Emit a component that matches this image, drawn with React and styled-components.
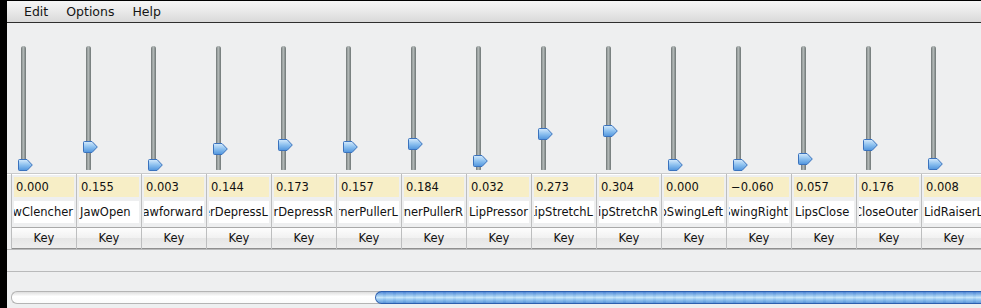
import React from "react"
import styled, { createGlobalStyle } from "styled-components"

const GlobalStyle = createGlobalStyle`
  html, body {
    margin: 0;
    padding: 0;
    background: #000000;
  }
`

const channels = [
  ["JawClencher", 0.0],
  ["JawOpen", 0.155],
  ["Jawforward", 0.003],
  ["LipCornerDepressL", 0.144],
  ["LipCornerDepressR", 0.173],
  ["LipCornerPullerL", 0.157],
  ["LipCornerPullerR", 0.184],
  ["LipPressor", 0.032],
  ["LipStretchL", 0.273],
  ["LipStretchR", 0.304],
  ["LipSwingLeft", 0.0],
  ["LipSwingRight", -0.06],
  ["LipsClose", 0.057],
  ["LidCloseOuter", 0.176],
  ["LidRaiserL", 0.008],
]

const Window = styled.div`
  width: 974px;
  height: 307px;
  margin-top: 1px;
  margin-left: 7px;
  background: #eeeff0;
  display: flex;
  flex-direction: column;
  overflow: hidden;
  font-family: "DejaVu Sans", "Liberation Sans", sans-serif;
  font-size: 11.5px;
  color: #111;
`

const MenuBar = styled.div`
  height: 21px;
  flex: none;
  display: flex;
  align-items: center;
  padding-left: 8px;
  background: linear-gradient(#f6f6f6, #e9e9e9 50%, #d9d9d9);
  border-bottom: 1px solid #2e2e2e;
`

const MenuItem = styled.span`
  padding: 0 9px;
  font-size: 12.5px;
  line-height: 21px;
  color: #151515;
`

const SliderRow = styled.div`
  display: flex;
  height: 150px;
  flex: none;
  padding-left: 4px;
`

const SliderCell = styled.div`
  position: relative;
  width: 65px;
  flex: none;
`

const Track = styled.div`
  margin: 23px 0 0 10px;
  width: 5px;
  height: 124px;
  border-radius: 3px 3px 1px 1px;
  background: linear-gradient(90deg, #6b7272, #b6bcbb 45%, #9aa1a0 65%, #6e7575);
`

const Thumb = styled.svg`
  position: absolute;
  left: 7px;
  width: 15px;
  height: 12px;
`

const Table = styled.div`
  border-top: 1px solid #c9cacb;
  box-shadow: inset 0 1px 0 #ffffff;
  padding-left: 4px;
  flex: none;
`

const Row = styled.div`
  display: flex;
  height: ${p => p.$h}px;
`

const Cell = styled.div`
  width: 65px;
  flex: none;
  box-sizing: border-box;
  border-left: 1px solid #bdbebf;
  padding: ${p => p.$pad};
  display: flex;
`

const ValueBox = styled.div`
  flex: 1;
  height: 20px;
  background: #f7eec6;
  line-height: 20px;
  padding-left: 2px;
  white-space: nowrap;
  overflow: hidden;
`

const NameBox = styled.div`
  flex: 1;
  height: 22px;
  background: #ffffff;
  line-height: 22px;
  padding: 0 1px;
  white-space: nowrap;
  overflow: hidden;
  direction: rtl;
  text-align: left;
`

const NameText = styled.bdi`
  direction: ltr;
  unicode-bidi: isolate;
`

const KeyButton = styled.div`
  flex: 1;
  height: 20px;
  border-top: 1px solid #a9a9a9;
  border-bottom: 1px solid #8f8f8f;
  background: linear-gradient(#fdfdfd, #f1f1f1 50%, #e6e6e6 51%, #eeeeee);
  text-align: center;
  line-height: 20px;
  font-size: 11.5px;
`

const Divider = styled.div`
  height: 21px;
  flex: none;
  border-top: 1px solid #b9babb;
`

const ScrollArea = styled.div`
  height: 18px;
  flex: none;
  border-top: 1px solid #b9babb;
  padding: 19px 0 0 4px;
`

const ScrollTrack = styled.div`
  height: 11px;
  display: flex;
  border: 1px solid #b4b4b4;
  border-right: none;
  border-radius: 6px 0 0 6px;
  background: linear-gradient(#dedede, #ffffff 40%, #fbfbfb);
  padding-left: 363px;
`

const ScrollThumb = styled.div`
  flex: 1;
  margin: -1px 0;
  border-radius: 7px 0 0 7px;
  border: 1px solid #2d5fae;
  border-right: none;
  background:
    repeating-linear-gradient(90deg, rgba(255, 255, 255, 0.06) 0 7px, rgba(60, 120, 200, 0.06) 7px 10px),
    linear-gradient(#4d86d6, #9ccbf1 35%, #c4e4fa 50%, #8fc3ef 70%, #5a95da);
`

const ThumbShape = () => (
  <defs>
    <linearGradient id="thumbFill" x1="0" y1="0" x2="0" y2="1">
      <stop offset="0" stopColor="#d6ebfc" />
      <stop offset="0.5" stopColor="#8cc0ef" />
      <stop offset="1" stopColor="#4f94dd" />
    </linearGradient>
  </defs>
)

const App = () => (
  <>
    <GlobalStyle />
    <Window>
      <MenuBar>
        <MenuItem>Edit</MenuItem>
        <MenuItem>Options</MenuItem>
        <MenuItem>Help</MenuItem>
      </MenuBar>
      <SliderRow>
        {channels.map(([name, v]) => (
          <SliderCell key={name}>
            <Track />
            <Thumb viewBox="0 0 15 12" style={{ top: 136 - Math.max(v, 0) * 113 }}>
              <ThumbShape />
              <path
                d="M1.5 0.5 H9 L14.3 6 L9 11.5 H1.5 Q0.5 11.5 0.5 10.5 V1.5 Q0.5 0.5 1.5 0.5 Z"
                fill="url(#thumbFill)"
                stroke="#3a72bd"
                strokeWidth="1"
              />
            </Thumb>
          </SliderCell>
        ))}
      </SliderRow>
      <Table>
        <Row $h={25}>
          {channels.map(([name, v]) => (
            <Cell key={name} $pad="3px 2px 2px 2px">
              <ValueBox>{v.toFixed(3).replace("-", "\u2212")}</ValueBox>
            </Cell>
          ))}
        </Row>
        <Row $h={25}>
          {channels.map(([name]) => (
            <Cell key={name} $pad="2px 2px 1px 2px">
              <NameBox>
                <NameText>{name}</NameText>
              </NameBox>
            </Cell>
          ))}
        </Row>
        <Row $h={25}>
          {channels.map(([name]) => (
            <Cell key={name} $pad="3px 0 0 0">
              <KeyButton>Key</KeyButton>
            </Cell>
          ))}
        </Row>
      </Table>
      <Divider />
      <ScrollArea>
        <ScrollTrack>
          <ScrollThumb />
        </ScrollTrack>
      </ScrollArea>
    </Window>
  </>
)

export default App
